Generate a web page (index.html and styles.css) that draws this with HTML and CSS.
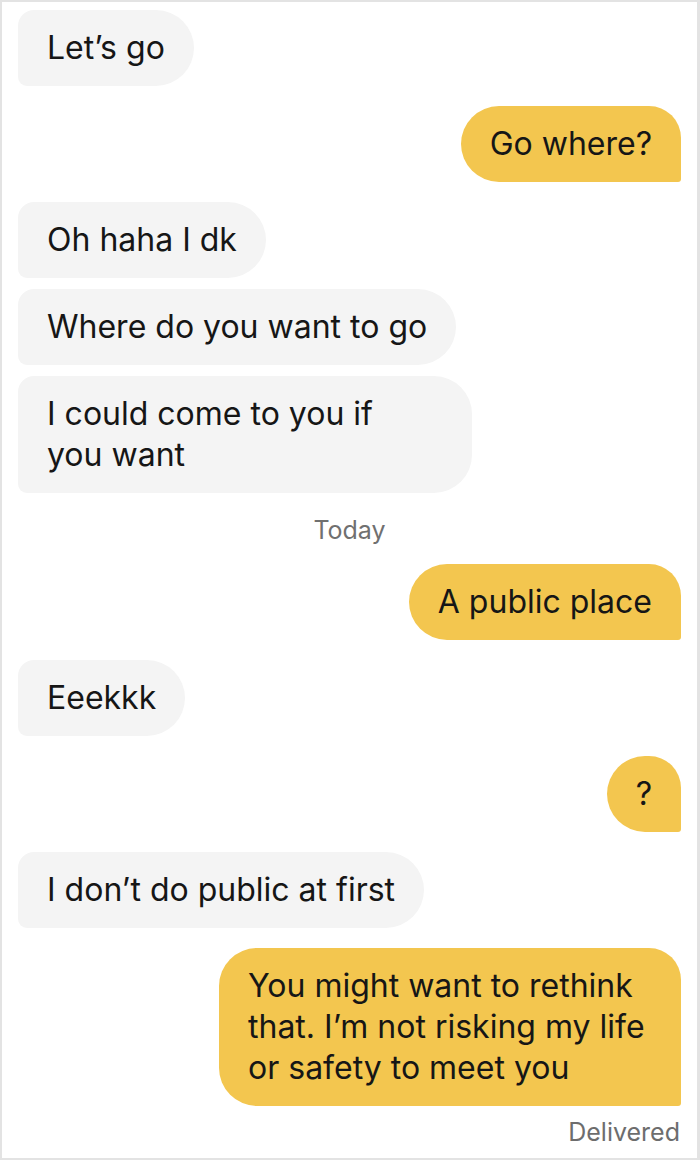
FILE: index.html
```html
<!DOCTYPE html>
<html lang="en">
<head>
<meta charset="utf-8">
<title>Chat</title>
<link rel="stylesheet" href="styles.css">
</head>
<body>
<div class="screen">
  <div class="thread">
    <div class="group in">
      <div class="bubble">Let’s go</div>
    </div>
    <div class="group out">
      <div class="bubble">Go where?</div>
    </div>
    <div class="group in">
      <div class="bubble">Oh haha I dk</div>
      <div class="bubble">Where do you want to go</div>
      <div class="bubble multi in-multi">I could come to you if<br>you want</div>
    </div>
    <div class="stamp">Today</div>
    <div class="group out">
      <div class="bubble">A public place</div>
    </div>
    <div class="group in">
      <div class="bubble">Eeekkk</div>
    </div>
    <div class="group out">
      <div class="bubble">?</div>
    </div>
    <div class="group in">
      <div class="bubble">I don’t do public at first</div>
    </div>
    <div class="group out">
      <div class="bubble multi out-multi">You might want to rethink<br>that. I’m not risking my life<br>or safety to meet you</div>
    </div>
    <div class="status">Delivered</div>
  </div>
</div>
</body>
</html>
```

FILE: styles.css
```css
html, body {
  margin: 0;
  padding: 0;
  background: #ffffff;
}

.screen {
  box-sizing: border-box;
  width: 700px;
  height: 1160px;
  border: 2px solid #e3e3e3;
  border-right-width: 3px;
  background: #ffffff;
  overflow: hidden;
  font-family: "Inter", "Liberation Sans", sans-serif;
  color: #161616;
}

.thread {
  display: flex;
  flex-direction: column;
  gap: 20px;
  padding: 8px 16px 0 16px;
}

.group {
  display: flex;
  flex-direction: column;
  gap: 11px;
}

.group.in { align-items: flex-start; }
.group.out { align-items: flex-end; }

.bubble {
  box-sizing: border-box;
  font-size: 32px;
  line-height: 41px;
  padding: 17px 29px 18px 29px;
  white-space: nowrap;
}

.in .bubble {
  background: #f4f4f4;
  border-radius: 16px 38px 38px 9px;
}

.out .bubble {
  background: #f3c64f;
  border-radius: 38px 32px 3px 38px;
}

.in-multi { width: 454px; }
.out-multi { width: 462px; }

.stamp {
  align-self: center;
  font-size: 25px;
  line-height: 28px;
  color: #707070;
  margin: 3px 0 0 0;
}

.status {
  align-self: flex-end;
  font-size: 25px;
  line-height: 28px;
  color: #6d6d6d;
  margin-top: -8px;
  margin-right: 1px;
}
```
